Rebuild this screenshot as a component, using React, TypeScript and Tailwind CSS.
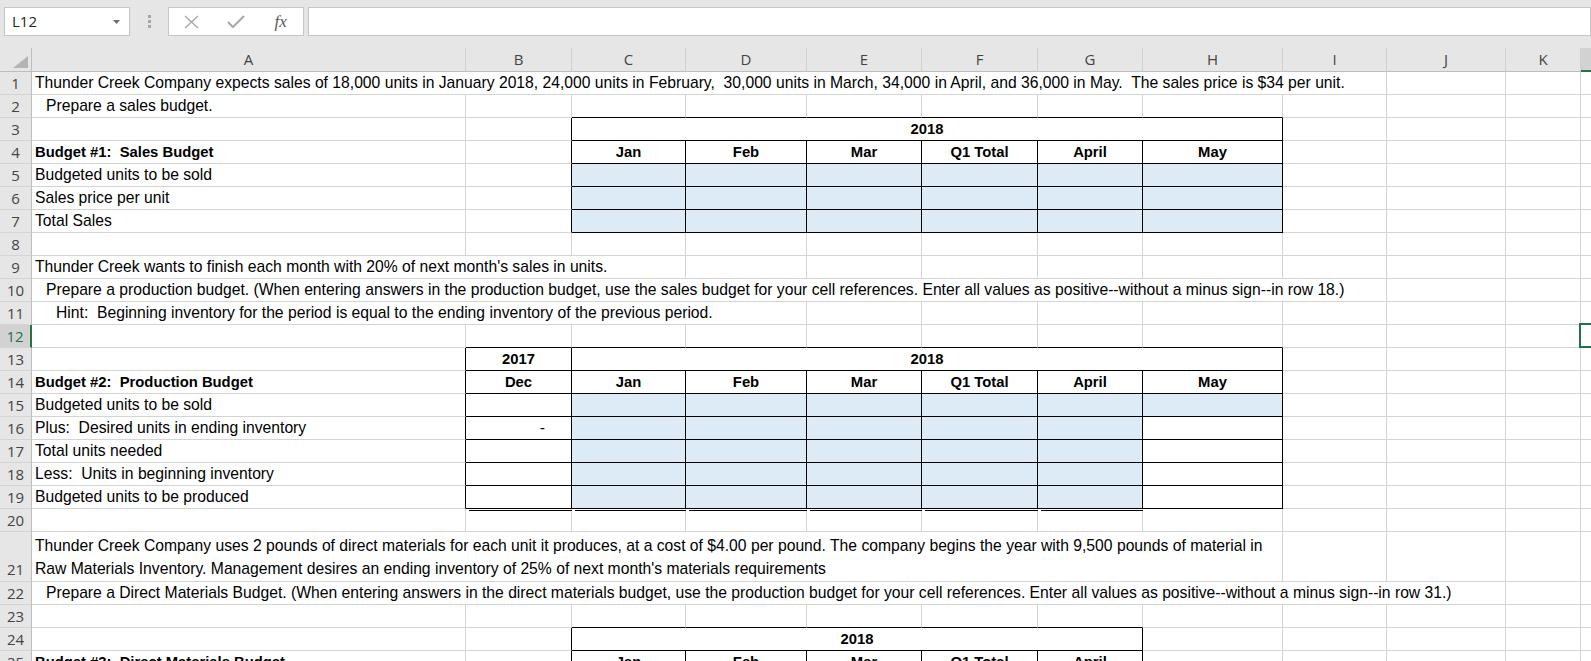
import React from 'react'
import clsx from 'clsx'

// column widths A..L
const W = [
  'w-[434px]',
  'w-[106px]',
  'w-[114px]',
  'w-[121px]',
  'w-[115px]',
  'w-[116px]',
  'w-[105px]',
  'w-[140px]',
  'w-[104px]',
  'w-[119px]',
  'w-[75px]',
  'w-[80px]',
]
const LETTERS = ['A', 'B', 'C', 'D', 'E', 'F', 'G', 'H', 'I', 'J', 'K', 'L']

// bordered table areas: [row from, row to, col from, col to]
const BOXES = [
  [3, 7, 2, 7],
  [13, 19, 1, 7],
  [24, 25, 2, 6],
]
const inBox = (r: number, c: number) =>
  BOXES.some(([r1, r2, c1, c2]) => r >= r1 && r <= r2 && c >= c1 && c <= c2)

const isBlue = (r: number, c: number) =>
  (r >= 5 && r <= 7 && c >= 2 && c <= 7) ||
  (r === 15 && c >= 2 && c <= 7) ||
  (r >= 16 && r <= 19 && c >= 2 && c <= 6)

type Spec = {
  text: React.ReactNode
  span?: number
  w?: string
  bold?: boolean
  align?: 'left' | 'center' | 'right'
  pad?: string
}
type RowDef = { cells: Record<number, Spec> }

const MONTHS = ['Jan', 'Feb', 'Mar', 'Q1 Total', 'April', 'May']
const months = (count: number) => {
  const out: Record<number, Spec> = {}
  MONTHS.slice(0, count).forEach((m, i) => {
    out[i + 2] = { text: m, bold: true, align: 'center' }
  })
  return out
}

const SHEET: Record<number, RowDef> = {
  1: {
    cells: {
      0: {
        text: 'Thunder Creek Company expects sales of 18,000 units in January 2018, 24,000 units in February,  30,000 units in March, 34,000 in April, and 36,000 in May.  The sales price is $34 per unit.',
        span: 8,
        w: 'w-[1355px]',
      },
    },
  },
  2: { cells: { 0: { text: 'Prepare a sales budget.', pad: 'pl-[14px]' } } },
  3: { cells: { 2: { text: '2018', span: 7, w: 'w-[711px]', bold: true, align: 'center' } } },
  4: { cells: { 0: { text: 'Budget #1:  Sales Budget', bold: true }, ...months(6) } },
  5: { cells: { 0: { text: 'Budgeted units to be sold' } } },
  6: { cells: { 0: { text: 'Sales price per unit' } } },
  7: { cells: { 0: { text: 'Total Sales' } } },
  9: {
    cells: {
      0: {
        text: "Thunder Creek wants to finish each month with 20% of next month's sales in units.",
        span: 2,
        w: 'w-[654px]',
      },
    },
  },
  10: {
    cells: {
      0: {
        text: 'Prepare a production budget. (When entering answers in the production budget, use the sales budget for your cell references. Enter all values as positive--without a minus sign--in row 18.)',
        span: 8,
        w: 'w-[1355px]',
        pad: 'pl-[14px]',
      },
    },
  },
  11: {
    cells: {
      0: {
        text: 'Hint:  Beginning inventory for the period is equal to the ending inventory of the previous period.',
        span: 3,
        w: 'w-[775px]',
        pad: 'pl-[24px]',
      },
    },
  },
  13: {
    cells: {
      1: { text: '2017', bold: true, align: 'center' },
      2: { text: '2018', span: 7, w: 'w-[711px]', bold: true, align: 'center' },
    },
  },
  14: {
    cells: {
      0: { text: 'Budget #2:  Production Budget', bold: true },
      1: { text: 'Dec', bold: true, align: 'center' },
      ...months(6),
    },
  },
  15: { cells: { 0: { text: 'Budgeted units to be sold' } } },
  16: {
    cells: {
      0: { text: 'Plus:  Desired units in ending inventory' },
      1: { text: '-', align: 'right', pad: 'pr-[26px]' },
    },
  },
  17: { cells: { 0: { text: 'Total units needed' } } },
  18: { cells: { 0: { text: 'Less:  Units in beginning inventory' } } },
  19: { cells: { 0: { text: 'Budgeted units to be produced' } } },
  21: {
    cells: {
      0: {
        text: (
          <div className="flex flex-col leading-[23px] pb-px">
            <span>
              Thunder Creek Company uses 2 pounds of direct materials for each unit it produces, at a cost of $4.00 per pound. The company begins the year with 9,500 pounds of material in
            </span>
            <span>
              Raw Materials Inventory. Management desires an ending inventory of 25% of next month's materials requirements
            </span>
          </div>
        ),
        span: 7,
        w: 'w-[1251px]',
      },
    },
  },
  22: {
    cells: {
      0: {
        text: 'Prepare a Direct Materials Budget. (When entering answers in the direct materials budget, use the production budget for your cell references. Enter all values as positive--without a minus sign--in row 31.)',
        span: 9,
        w: 'w-[1474px]',
        pad: 'pl-[14px]',
      },
    },
  },
  24: { cells: { 2: { text: '2018', span: 6, w: 'w-[571px]', bold: true, align: 'center' } } },
  25: { cells: { 0: { text: 'Budget #3:  Direct Materials Budget', bold: true }, ...months(5) } },
}

const ROWS = Array.from({ length: 25 }, (_, i) => i + 1)

function FormulaBar() {
  return (
    <div className="h-[48px] bg-[#e6e6e6] flex items-start pt-[7px] pl-[4px]">
      <div className="w-[126px] h-[29px] shrink-0 bg-white border border-[#c6c6c6] flex items-center justify-between pl-[7px] pr-[9px]">
        <span className="text-[15px] text-[#262626] font-['Open_Sans',sans-serif]">L12</span>
        <svg width="7" height="4" viewBox="0 0 7 4">
          <path d="M0 0 H7 L3.5 4 Z" fill="#6d6d6d" />
        </svg>
      </div>
      <div className="w-[38px] h-[29px] shrink-0 flex flex-col items-center justify-center gap-[2px]">
        <div className="w-[3px] h-[3px] bg-[#a6a6a6]" />
        <div className="w-[3px] h-[3px] bg-[#a6a6a6]" />
        <div className="w-[3px] h-[3px] bg-[#a6a6a6]" />
      </div>
      <div className="w-[136px] h-[29px] shrink-0 bg-white border border-[#c6c6c6] flex items-center">
        <div className="w-[45px] flex justify-center">
          <svg width="15" height="14" viewBox="0 0 15 14">
            <path d="M1 1 L14 13 M14 1 L1 13" stroke="#a8a8a8" strokeWidth="1.4" fill="none" />
          </svg>
        </div>
        <div className="w-[45px] flex justify-center">
          <svg width="18" height="13" viewBox="0 0 18 13">
            <path d="M1 7 L6 12 L17 1" stroke="#a8a8a8" strokeWidth="2" fill="none" />
          </svg>
        </div>
        <div className="w-[45px] flex justify-center">
          <span className="italic text-[17px] text-[#595959] font-['Liberation_Serif',serif] leading-none">
            fx
          </span>
        </div>
      </div>
      <div className="flex-1 ml-[4px] h-[29px] bg-white border border-[#c6c6c6]" />
    </div>
  )
}

function ColumnHeaders() {
  return (
    <div className="flex h-[24px] bg-[#e6e6e6] font-['Open_Sans',sans-serif] text-[15px] text-[#444]">
      <div className="w-[32px] h-full shrink-0 border-r border-b border-[#bdbdbd] flex items-end justify-end pr-[3px] pb-[3px]">
        <svg width="15" height="12" viewBox="0 0 15 12">
          <path d="M15 0 L15 12 L0 12 Z" fill="#b4b4b4" />
        </svg>
      </div>
      {LETTERS.map((l, i) => (
        <div
          key={l}
          className={clsx(
            'h-full shrink-0 border-r border-r-[#d0d0d0] flex items-center justify-center',
            W[i],
            l === 'L' ? 'bg-[#d2d2d2] border-b-2 border-b-[#217346] text-[#217346]' : 'border-b border-b-[#bdbdbd]',
          )}
        >
          {l}
        </div>
      ))}
    </div>
  )
}

function SheetRow({ n }: { n: number }) {
  const def = SHEET[n] ?? { cells: {} }
  const cells: React.ReactNode[] = []
  for (let c = 0; c < 12; c++) {
    const spec = def.cells[c]
    const end = spec?.span ?? c
    const rb = inBox(n, end) || inBox(n, end + 1)
    const bb = inBox(n, c) || inBox(n + 1, c)
    const selected = n === 12 && c === 11
    cells.push(
      <div
        key={c}
        className={clsx(
          'relative h-full shrink-0 border-r border-b flex whitespace-pre',
          spec?.w ?? W[c],
          rb ? 'border-r-black' : 'border-r-[#d4d4d4]',
          bb ? 'border-b-black' : 'border-b-[#d4d4d4]',
          isBlue(n, c) && 'bg-[#ddebf7]',
          n === 21 ? 'items-end' : 'items-center',
          n === 20 && c >= 1 && c <= 6 && 'flex-col items-start',
          spec?.align === 'center' && 'justify-center',
          spec?.align === 'right' && 'justify-end',
          spec?.bold && 'font-bold text-[14.8px]',
          spec?.pad ?? (spec?.align ? '' : 'pl-[3px]'),
        )}
      >
        {n === 20 && c >= 1 && c <= 6 && <div className="mt-px h-px w-[calc(100%+1px)] bg-black" />}
        {spec?.text}
        {selected && (
          <div className="absolute -left-[2px] -top-[2px] -bottom-[1px] w-[20px] border-2 border-[#217346]" />
        )}
      </div>,
    )
    c = end
  }
  return (
    <div className={clsx('flex', n === 21 ? 'h-[50px]' : 'h-[23px]')}>
      <div
        className={clsx(
          'w-[32px] h-full shrink-0 border-b border-b-[#d4d4d4] flex justify-center font-["Open_Sans",sans-serif] text-[15px]',
          n === 21 ? 'items-end pb-[1px]' : 'items-center',
          n === 12
            ? 'bg-[#d2d2d2] border-r-2 border-r-[#217346] text-[#217346]'
            : 'bg-[#e6e6e6] border-r border-r-[#bdbdbd] text-[#444]',
        )}
      >
        {n}
      </div>
      {cells}
    </div>
  )
}

export default function App() {
  return (
    <div className="w-[1591px] h-[661px] overflow-hidden bg-white font-['Liberation_Sans',Arial,sans-serif] text-[15.7px] text-black">
      <FormulaBar />
      <ColumnHeaders />
      {ROWS.map((n) => (
        <SheetRow key={n} n={n} />
      ))}
    </div>
  )
}
